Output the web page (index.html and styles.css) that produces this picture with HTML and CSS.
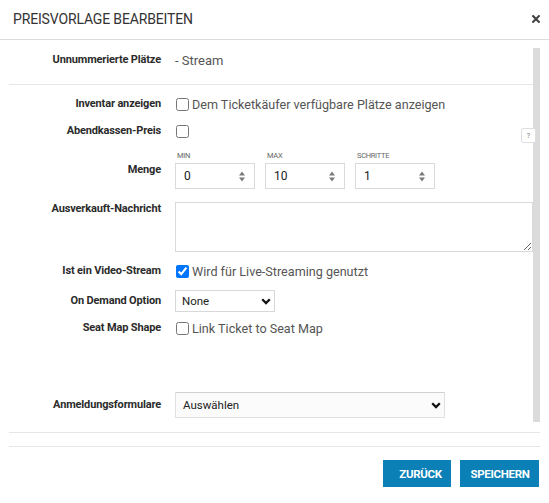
FILE: index.html
```html
<!DOCTYPE html>
<html lang="de">
<head>
<meta charset="utf-8">
<title>Preisvorlage bearbeiten</title>
<link rel="stylesheet" href="styles.css">
</head>
<body>
<div class="modal">
  <div class="modal-header">
    <h1 class="title">PREISVORLAGE BEARBEITEN</h1>
    <button class="close" aria-label="Schließen">
      <svg width="8" height="8" viewBox="0 0 8 8"><path d="M1.1 1.1 L6.9 6.9 M6.9 1.1 L1.1 6.9" stroke="#444" stroke-width="2.1" stroke-linecap="square"/></svg>
    </button>
  </div>
  <div class="modal-body">
    <div class="scroll">
      <div class="row row-top">
        <div class="label">Unnummerierte Plätze</div>
        <div class="value static">- Stream</div>
      </div>

      <div class="row row-inventar">
        <div class="label">Inventar anzeigen</div>
        <label class="value check"><input type="checkbox"><span>Dem Ticketkäufer verfügbare Plätze anzeigen</span></label>
      </div>

      <div class="row row-abend">
        <div class="label">Abendkassen-Preis</div>
        <label class="value check"><input type="checkbox"></label>
      </div>

      <div class="row row-menge">
        <div class="label label-menge">Menge</div>
        <div class="value numbers">
          <div class="num">
            <div class="num-cap">MIN</div>
            <div class="num-box"><input type="text" value="0"><svg class="spin" width="6" height="11" viewBox="0 0 6 11"><path d="M0 4.5 L3 0.5 L6 4.5 Z M0 6.5 L3 10.5 L6 6.5 Z" fill="#7a7a7a"/></svg></div>
          </div>
          <div class="num">
            <div class="num-cap">MAX</div>
            <div class="num-box"><input type="text" value="10"><svg class="spin" width="6" height="11" viewBox="0 0 6 11"><path d="M0 4.5 L3 0.5 L6 4.5 Z M0 6.5 L3 10.5 L6 6.5 Z" fill="#7a7a7a"/></svg></div>
          </div>
          <div class="num">
            <div class="num-cap">SCHRITTE</div>
            <div class="num-box"><input type="text" value="1"><svg class="spin" width="6" height="11" viewBox="0 0 6 11"><path d="M0 4.5 L3 0.5 L6 4.5 Z M0 6.5 L3 10.5 L6 6.5 Z" fill="#7a7a7a"/></svg></div>
          </div>
        </div>
      </div>

      <div class="row row-msg">
        <div class="label">Ausverkauft-Nachricht</div>
        <div class="value"><textarea class="msg"></textarea></div>
      </div>

      <div class="row row-video">
        <div class="label">Ist ein Video-Stream</div>
        <label class="value check"><input type="checkbox" checked><span>Wird für Live-Streaming genutzt</span></label>
      </div>

      <div class="row row-demand">
        <div class="label">On Demand Option</div>
        <div class="value">
          <div class="select select-small"><span>None</span><svg width="10" height="7" viewBox="0 0 10 7"><path d="M1.2 1.3 L5 5.1 L8.8 1.3" fill="none" stroke="#111" stroke-width="2.3"/></svg></div>
        </div>
      </div>

      <div class="row row-seat">
        <div class="label">Seat Map Shape</div>
        <label class="value check"><input type="checkbox"><span>Link Ticket to Seat Map</span></label>
      </div>

      <div class="row row-forms">
        <div class="label">Anmeldungsformulare</div>
        <div class="value">
          <div class="select select-wide"><span>Auswählen</span><svg width="10" height="7" viewBox="0 0 10 7"><path d="M1.2 1.3 L5 5.1 L8.8 1.3" fill="none" stroke="#111" stroke-width="2.3"/></svg></div>
        </div>
      </div>

      <span class="help">?</span>
      <div class="thumb"></div>
    </div>
  </div>
  <div class="modal-footer">
    <button class="btn btn-back">ZURÜCK</button>
    <button class="btn btn-save">SPEICHERN</button>
  </div>
</div>
</body>
</html>
```

FILE: styles.css
```css
* { box-sizing: border-box; }

html, body {
  margin: 0;
  padding: 0;
  background: #fff;
}

body {
  font-family: Roboto, "Liberation Sans", sans-serif;
  color: #333;
  width: 549px;
  height: 503px;
  overflow: hidden;
}

.modal {
  width: 549px;
}

.modal-header {
  height: 40px;
  border-bottom: 1px solid #dcdcdc;
  display: flex;
  align-items: center;
  justify-content: space-between;
  padding: 0 9px 1px 13px;
}

.title {
  margin: 0;
  font-size: 14px;
  font-weight: 400;
  color: #333;
  letter-spacing: -0.15px;
}

.close {
  border: 0;
  background: none;
  padding: 0;
  width: 8px;
  height: 8px;
  display: flex;
}

.modal-body {
  padding: 0 9px;
}

.scroll {
  position: relative;
  border-bottom: 1px solid #e6e6e6;
  padding-bottom: 14px;
}

.row {
  display: flex;
  align-items: center;
  gap: 14px;
}

.label {
  width: 152px;
  flex: none;
  text-align: right;
  font-size: 11px;
  font-weight: 700;
  line-height: 14px;
  color: #2b2b2b;
  letter-spacing: -0.15px;
}

.value {
  flex: 1;
  min-width: 0;
}

.static {
  font-size: 13px;
  color: #555;
}

.check {
  display: flex;
  align-items: center;
  gap: 3px;
  font-size: 12.6px;
  color: #555;
  height: 18px;
}

.check input {
  margin: 0 0 0 1px;
  width: 13px;
  height: 13px;
}

.row-top {
  height: 45px;
  padding-bottom: 4px;
  border-bottom: 1px solid #e6e6e6;
}

.row-inventar { margin-top: 10px; height: 18px; }
.row-abend { margin-top: 9px; height: 18px; }

.row-menge {
  margin-top: 10px;
  align-items: flex-start;
}

.label-menge { padding-top: 13px; }

.numbers {
  display: flex;
  gap: 10px;
}

.num { width: 80px; }

.num-cap {
  height: 13px;
  font-size: 7.5px;
  line-height: 11px;
  color: #666;
  padding-left: 2px;
  letter-spacing: -0.3px;
}

.num-box {
  height: 26px;
  border: 1px solid #d9d9d9;
  display: flex;
  align-items: center;
  padding: 0 9px 0 8px;
}

.num-box input {
  border: 0;
  outline: 0;
  padding: 0;
  width: 50px;
  flex: 1;
  font-family: Roboto, sans-serif;
  font-size: 12px;
  color: #222;
  background: transparent;
}

.spin { flex: none; }

.row-msg {
  margin-top: 13px;
  align-items: flex-start;
}

.msg {
  display: block;
  width: 358px;
  height: 50px;
  border: 1px solid #dadada;
  margin: 0;
  resize: vertical;
}

.row-video { margin-top: 10px; height: 18px; }
.row-demand { margin-top: 10px; }
.row-seat { margin-top: 7px; height: 18px; }
.row-forms { margin-top: 55px; }

.select {
  display: flex;
  align-items: center;
  justify-content: space-between;
  border: 1px solid #d8d8d8;
  background: #fbfbfb;
  font-size: 11.5px;
  color: #222;
}

.select-small {
  width: 100px;
  height: 22px;
  padding: 0 3px 0 6px;
  background: #fff;
}

.select-wide {
  width: 270px;
  height: 26px;
  padding: 0 3px 0 7px;
  border-color: #d0d0d0 #e0e0e0 #e0e0e0 #e0e0e0;
}

.help {
  position: absolute;
  left: 512px;
  top: 88px;
  width: 15px;
  height: 15px;
  border: 1px solid #dedede;
  border-radius: 2px;
  background: #fff;
  font-size: 8px;
  line-height: 13px;
  text-align: center;
  color: #888;
  z-index: 2;
}

.thumb {
  position: absolute;
  left: 524px;
  top: 8px;
  width: 7px;
  bottom: 10px;
  background: #d9d9d9;
  opacity: 0.95;
}

.modal-footer {
  margin: 13px 9px 0;
  border-top: 1px solid #e6e6e6;
  padding: 13px 1px 0 0;
  display: flex;
  justify-content: flex-end;
  gap: 9px;
}

.btn {
  height: 27px;
  border: 0;
  background: #0a80b6;
  color: #fff;
  font-family: Roboto, sans-serif;
  font-weight: 700;
  font-size: 11.5px;
  letter-spacing: -0.3px;
}

.btn-back { width: 68px; padding: 0 8px 0 15px; }
.btn-save { width: 79px; padding: 0 8px 0 9px; }
```
